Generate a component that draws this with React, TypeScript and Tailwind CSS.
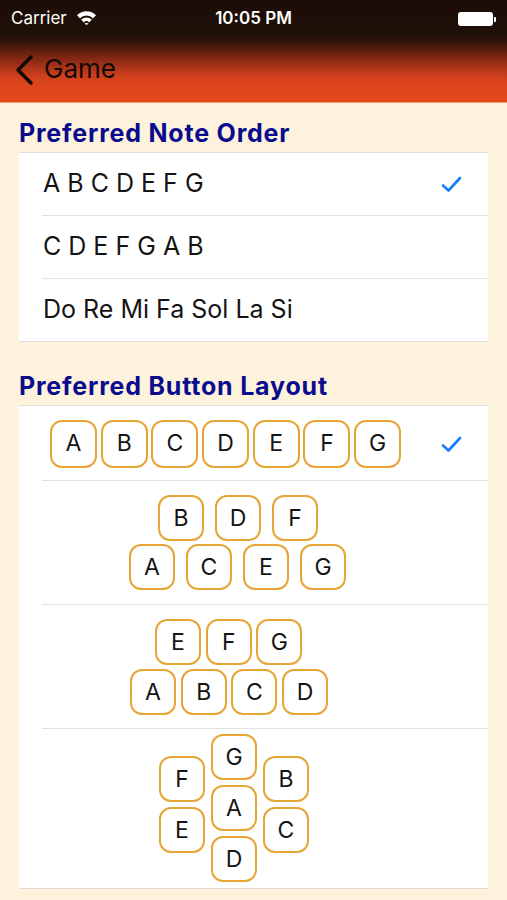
import React from "react";

const NOTE_ORDERS = ["A B C D E F G", "C D E F G A B", "Do Re Mi Fa Sol La Si"];

const Check = () => (
  <svg width="21" height="17" viewBox="0 0 21 17" className="shrink-0">
    <path d="M2 9.5 L7.5 14.5 L19 2" fill="none" stroke="#157efb" strokeWidth="2.6" strokeLinecap="round" strokeLinejoin="round" />
  </svg>
);

const Key = ({ label, big = false }: { label: string; big?: boolean }) => (
  <div
    className={`${big ? "w-[47px] h-[48px]" : "w-[46px] h-[46px]"} shrink-0 rounded-[12px] border-2 border-[#e6a636] bg-white flex items-center justify-center text-[23px] text-[#141414]`}
  >
    {label}
  </div>
);

const Separator = () => <div className="ml-[23px] h-px bg-[#e4e2de]" />;

export default function App() {
  return (
    <div className="w-[507px] h-[900px] overflow-hidden bg-[#fdf2dc] font-['Inter','Liberation_Sans',sans-serif]">
      {/* Status + nav bar */}
      <div className="h-[103px] bg-[linear-gradient(to_bottom,#1c0e07_0px,#1e0f07_34px,#351408_42px,#8a2a14_60px,#cf3f1c_76px,#e0451d_88px,#e4491f_101px)] border-b border-[#f0a070]">
        <div className="h-[36px] pt-[2px] flex items-center px-[11px] text-white text-[17px] relative">
          <span>Carrier</span>
          <svg width="21" height="16" viewBox="0 0 21 16" className="ml-[9px] mt-[-2px]">
            <path d="M10.5 15 L1 5.2 A13.5 13.5 0 0 1 20 5.2 Z" fill="#ffffff" />
            <path d="M10.5 15 L3.9 8.2 A9.4 9.4 0 0 1 17.1 8.2 Z" fill="#1e0f07" />
            <path d="M10.5 15 L5.3 9.7 A7.4 7.4 0 0 1 15.7 9.7 Z" fill="#ffffff" />
            <path d="M10.5 15 L7.8 12.2 A3.9 3.9 0 0 1 13.2 12.2 Z" fill="#1e0f07" />
            <path d="M10.5 15 L9 13.4 A2.2 2.2 0 0 1 12 13.4 Z" fill="#ffffff" />
          </svg>
          <span className="absolute left-0 right-0 text-center font-semibold pointer-events-none">10:05 PM</span>
          <div className="ml-auto flex items-center">
            <div className="w-[35px] h-[14px] rounded-[3px] bg-white" />
            <div className="w-[2px] h-[5px] rounded-r-[1px] bg-white ml-px" />
          </div>
        </div>
        <div className="h-[66px] flex items-center pl-[14px]">
          <svg width="20" height="32" viewBox="0 0 20 32" className="mt-[1px]">
            <path d="M17 3 L4 16 L17 29" fill="none" stroke="#0f0805" strokeWidth="3.4" strokeLinecap="round" strokeLinejoin="round" />
          </svg>
          <span className="ml-[10px] text-[26px] text-[#120905] leading-none">Game</span>
        </div>
      </div>

      {/* Preferred Note Order */}
      <div className="pl-[19px] pt-[18px] pb-[7px] text-[25px] leading-[24px] tracking-[0.8px] font-bold text-[#0b0b8e]">
        Preferred Note Order
      </div>
      <div className="mx-[19px] bg-white border-y border-[#e0ddd8]">
        {NOTE_ORDERS.map((label, i) => (
          <div key={label}>
            {i > 0 && <Separator />}
            <div className="h-[62px] flex items-center pl-[24px] pr-[26px] text-[25px] text-[#141414]">
              <span>{label}</span>
              {i === 0 && (
                <span className="ml-auto">
                  <Check />
                </span>
              )}
            </div>
          </div>
        ))}
      </div>

      {/* Preferred Button Layout */}
      <div className="pl-[19px] pt-[32px] pb-[7px] text-[25px] leading-[24px] tracking-[0.8px] font-bold text-[#0b0b8e]">
        Preferred Button Layout
      </div>
      <div className="mx-[19px] bg-white border-y border-[#e0ddd8]">
        {/* Single row */}
        <div className="h-[74px] flex items-center pl-[31px] pr-[26px]">
          <div className="flex gap-[3.7px] mt-[1px]">
            {["A", "B", "C", "D", "E", "F", "G"].map((k) => (
              <Key key={k} label={k} big />
            ))}
          </div>
          <span className="ml-auto mt-[2px]">
            <Check />
          </span>
        </div>
        <Separator />

        {/* Interleaved rows */}
        <div className="h-[123px] pt-[14px] pl-[110px] flex flex-col gap-[3px]">
          <div className="flex gap-[11px] ml-[29px]">
            {["B", "D", "F"].map((k) => (
              <Key key={k} label={k} />
            ))}
          </div>
          <div className="flex gap-[11px]">
            {["A", "C", "E", "G"].map((k) => (
              <Key key={k} label={k} />
            ))}
          </div>
        </div>
        <Separator />

        {/* Two rows, shifted */}
        <div className="h-[123px] pt-[14px] pl-[111px] flex flex-col gap-[4px]">
          <div className="flex gap-[4.7px] ml-[25px]">
            {["E", "F", "G"].map((k) => (
              <Key key={k} label={k} />
            ))}
          </div>
          <div className="flex gap-[4.7px]">
            {["A", "B", "C", "D"].map((k) => (
              <Key key={k} label={k} />
            ))}
          </div>
        </div>
        <Separator />

        {/* Hexagonal cluster */}
        <div className="h-[159px] pt-[5px] pl-[140px] flex gap-[6px]">
          <div className="flex flex-col gap-[5px] mt-[22px]">
            <Key label="F" />
            <Key label="E" />
          </div>
          <div className="flex flex-col gap-[5px]">
            <Key label="G" />
            <Key label="A" />
            <Key label="D" />
          </div>
          <div className="flex flex-col gap-[5px] mt-[22px]">
            <Key label="B" />
            <Key label="C" />
          </div>
        </div>
      </div>
    </div>
  );
}
